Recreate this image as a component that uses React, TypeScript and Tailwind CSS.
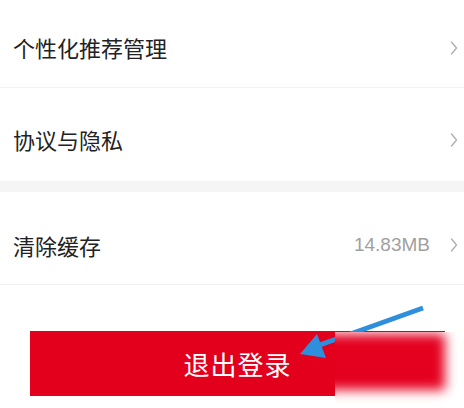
const Chevron = () => (
  <svg width="8" height="16" viewBox="0 0 8 16" fill="none" className="shrink-0">
    <path d="M1.5 2 L6.5 8 L1.5 14" stroke="#b0b0b0" strokeWidth="1.4" strokeLinecap="round" strokeLinejoin="round" />
  </svg>
);

const font = { fontFamily: '"Noto Sans CJK SC", "Noto Sans", sans-serif' };

export default function App() {
  return (
    <div className="relative w-[464px] h-[408px] bg-white overflow-hidden" style={font}>
      <div className="flex items-center justify-between h-[88px] pt-[8px] pl-[13px] pr-[6px] border-b border-[#f3f3f3]">
        <span className="text-[22px] text-[#222]">个性化推荐管理</span>
        <Chevron />
      </div>
      <div className="flex items-center justify-between h-[93px] pt-[10px] pl-[13px] pr-[6px]">
        <span className="text-[22px] text-[#222]">协议与隐私</span>
        <Chevron />
      </div>
      <div className="h-[11px] bg-[#f5f5f5]" />
      <div className="flex items-center justify-between h-[93px] pt-[14px] pl-[13px] pr-[6px] border-b border-[#f1f1f1]">
        <span className="text-[22px] text-[#222]">清除缓存</span>
        <div className="flex items-center gap-[20px]">
          <span className="text-[19px] text-[#a0a0a0]" style={{ fontFamily: '"Liberation Sans", Arial, sans-serif' }}>14.83MB</span>
          <Chevron />
        </div>
      </div>
      <div className="pt-[46px] pl-[30px]">
        <div className="flex items-center justify-center w-[415px] h-[65px] bg-[#e2001d]">
          <span className="text-[26px] text-white tracking-[1px]">退出登录</span>
        </div>
      </div>

      <svg className="absolute left-0 top-0" width="464" height="408" viewBox="0 0 464 408">
        <line x1="423" y1="308" x2="314" y2="347" stroke="#2e8fdc" strokeWidth="5" />
        <polygon points="300,354 317,334 326,358" fill="#2e8fdc" />
      </svg>

      <div className="absolute left-[335px] top-[332px] w-[129px] h-[76px] bg-white overflow-hidden">
        <div className="absolute -left-[20px] top-[2px] w-[130px] h-[56px] bg-[#e4001f] blur-[6px]" />
      </div>
    </div>
  );
}
